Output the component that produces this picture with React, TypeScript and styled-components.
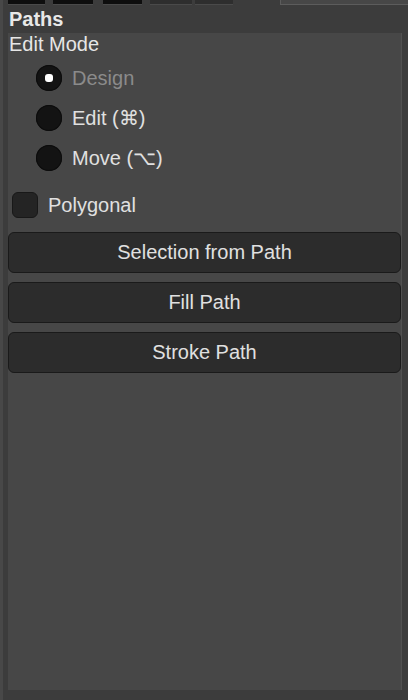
import styled, { createGlobalStyle } from 'styled-components';

const GlobalStyle = createGlobalStyle`
  html, body {
    margin: 0;
    padding: 0;
    background: #3c3c3c;
  }
  body {
    font-family: "Liberation Sans", Arial, sans-serif;
  }
`;

// widths and gaps of the little tabs along the top edge
const tabs = [
  { width: 37, gap: 8, kind: 'dark' },
  { width: 40, gap: 10, kind: 'dark' },
  { width: 39, gap: 8, kind: 'dark' },
  { width: 42, gap: 3, kind: 'grey' },
  { width: 38, gap: 0, kind: 'grey' },
  { width: 47, gap: 0, kind: 'active' },
  { width: 0, gap: 0, kind: 'rest' }
];

const modes = [
  { label: 'Design', checked: true },
  { label: 'Edit (⌘)', checked: false },
  { label: 'Move (⌥)', checked: false }
];

const actions = ['Selection from Path', 'Fill Path', 'Stroke Path'];

const App = () => {
  return (
    <Frame>
      <GlobalStyle />
      <TabStrip>
        {tabs.map((t, i) => (
          <Tab key={i} $kind={t.kind} $gap={t.gap} $width={t.width} />
        ))}
      </TabStrip>
      <Header>Paths</Header>
      <Panel>
        <SectionTitle>Edit Mode</SectionTitle>
        <RadioGroup>
          {modes.map((m) => (
            <RadioRow key={m.label}>
              <Radio $checked={m.checked} />
              <RadioLabel $dim={m.checked}>{m.label}</RadioLabel>
            </RadioRow>
          ))}
        </RadioGroup>
        <CheckRow>
          <CheckBox />
          <CheckLabel>Polygonal</CheckLabel>
        </CheckRow>
        <ButtonList>
          {actions.map((a) => (
            <ActionButton key={a}>{a}</ActionButton>
          ))}
        </ButtonList>
      </Panel>
    </Frame>
  );
};

export default App;

const Frame = styled.div`
  width: 408px;
  height: 700px;
  box-sizing: border-box;
  border-left: 3px solid #484848;
  display: flex;
  flex-direction: column;
  overflow: hidden;
`;

const TabStrip = styled.div`
  height: 5px;
  display: flex;
  padding-left: 5px;
`;

const Tab = styled.div<{ $kind: string; $gap: number; $width: number }>`
  height: 5px;
  box-sizing: border-box;
  width: ${(p) => (p.$width ? `${p.$width}px` : 'auto')};
  margin-right: ${(p) => p.$gap}px;
  background: ${(p) =>
    p.$kind === 'dark' ? '#0e0e0e' : p.$kind === 'grey' ? '#2e2e2e' : p.$kind === 'active' ? '#3c3c3c' : '#474747'};
  border-bottom: ${(p) => (p.$kind === 'rest' ? '1px solid #5c5c5c' : p.$kind === 'active' ? '0' : '1px solid #4a4a4a')};
  border-left: ${(p) => (p.$kind === 'rest' ? '1px solid #5c5c5c' : '0')};
  flex: ${(p) => (p.$kind === 'rest' ? '1' : 'none')};
`;

const Header = styled.div`
  height: 28px;
  line-height: 28px;
  padding-left: 6px;
  font-size: 20px;
  font-weight: bold;
  color: #e8e8e8;
`;

const Panel = styled.div`
  flex: 1;
  margin: 0 6px 10px 5px;
  background: #474747;
  border-right: 1px solid #505050;
  display: flex;
  flex-direction: column;
`;

const SectionTitle = styled.div`
  height: 22px;
  line-height: 22px;
  padding-left: 1px;
  font-size: 20px;
  color: #e6e6e6;
`;

const RadioGroup = styled.div`
  padding-top: 3px;
  display: flex;
  flex-direction: column;
`;

const RadioRow = styled.div`
  height: 40px;
  display: flex;
  align-items: center;
  padding-left: 28px;
  gap: 10px;
`;

const Radio = styled.span<{ $checked: boolean }>`
  width: 26px;
  height: 26px;
  border-radius: 50%;
  background: #131313;
  box-shadow: inset 0 0 0 1px #0c0c0c;
  display: flex;
  align-items: center;
  justify-content: center;

  &::after {
    content: '';
    display: ${(p) => (p.$checked ? 'block' : 'none')};
    width: 8px;
    height: 8px;
    border-radius: 3px;
    background: #ffffff;
  }
`;

const RadioLabel = styled.span<{ $dim: boolean }>`
  font-size: 20px;
  color: ${(p) => (p.$dim ? '#8b8b8b' : '#e0e0e0')};
`;

const CheckRow = styled.div`
  margin-top: 14px;
  height: 26px;
  display: flex;
  align-items: center;
  padding-left: 4px;
  gap: 10px;
`;

const CheckBox = styled.span`
  width: 26px;
  height: 26px;
  box-sizing: border-box;
  border-radius: 6px;
  background: #242424;
  border: 1px solid #181818;
`;

const CheckLabel = styled.span`
  font-size: 20px;
  color: #e0e0e0;
`;

const ButtonList = styled.div`
  margin-top: 14px;
  display: flex;
  flex-direction: column;
  gap: 9px;
`;

const ActionButton = styled.button`
  height: 41px;
  width: 100%;
  box-sizing: border-box;
  margin: 0;
  padding: 0;
  background: #2c2c2c;
  border: 1px solid #1a1a1a;
  border-radius: 6px;
  color: #e0e0e0;
  font-family: "Liberation Sans", Arial, sans-serif;
  font-size: 20px;
  text-align: center;
`;
